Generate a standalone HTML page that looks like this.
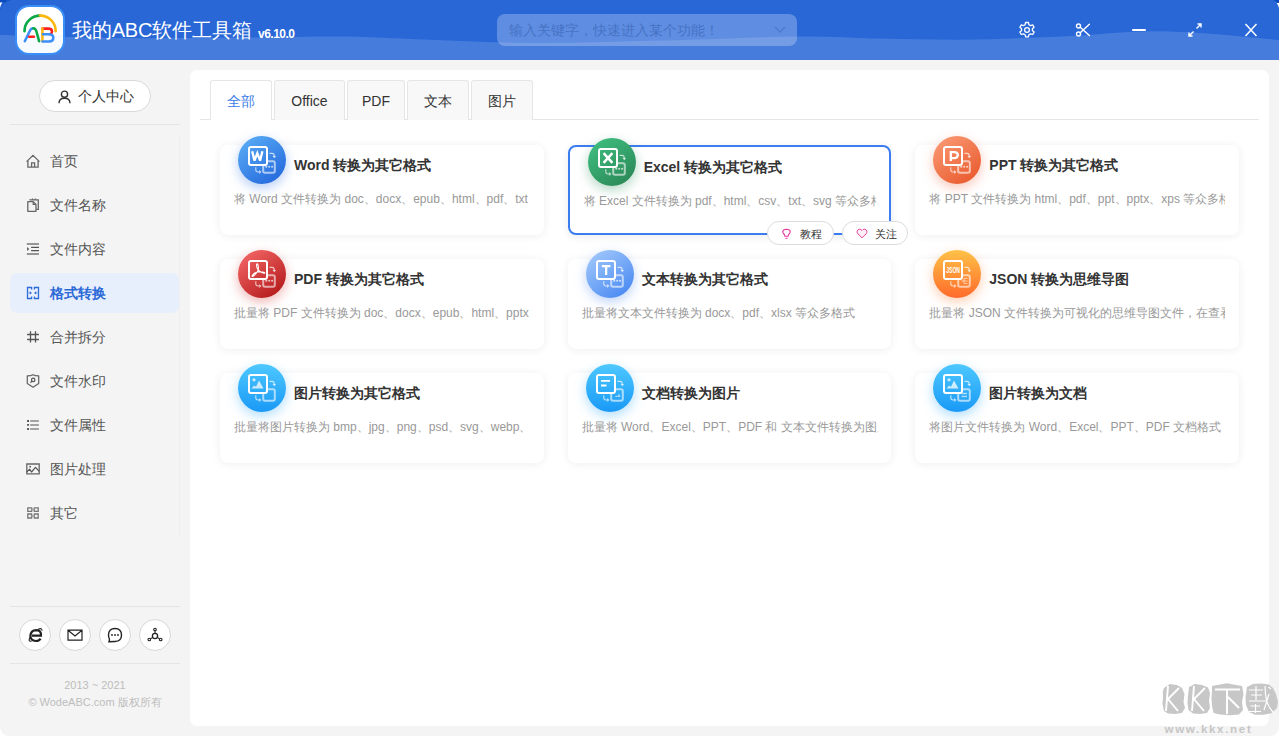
<!DOCTYPE html>
<html><head><meta charset="utf-8">
<style>
*{margin:0;padding:0;box-sizing:border-box}
html,body{width:1279px;height:736px;overflow:hidden;background:#f4f4f4;font-family:"Liberation Sans",sans-serif;}
.abs{position:absolute}
#hdr{position:absolute;left:0;top:0;width:1279px;height:60px;}
.ttl{position:absolute;left:72px;top:17px;font-size:20px;color:#fff;line-height:26px;white-space:nowrap;letter-spacing:-0.2px}
.ver{position:absolute;left:258px;top:26.5px;font-size:12px;font-weight:bold;color:#fff;line-height:14px;letter-spacing:-0.5px}
.search{position:absolute;left:497px;top:14px;width:300px;height:32px;border-radius:8px;background:rgba(255,255,255,0.25)}
.search span{position:absolute;left:12px;top:8px;font-size:14px;line-height:16px;color:rgba(40,80,160,0.45);white-space:nowrap}
#side{position:absolute;left:0;top:60px;width:190px;height:676px}
.pill{position:absolute;left:39px;top:80px;width:112px;height:32px;border-radius:16px;background:#fff;border:1px solid #d9d9d9;}
.pill span{position:absolute;left:38px;top:7px;font-size:14px;line-height:16px;color:#333;white-space:nowrap}
.hr{position:absolute;height:1px;background:#e4e4e4}
.nav{position:absolute;left:10px;width:169px;height:40px;border-radius:7px}
.nav span{position:absolute;left:40px;top:12px;font-size:14px;line-height:16px;color:#555;white-space:nowrap}
.nav svg{position:absolute;left:16px;top:13px}
.nav.on{background:#e8effc}
.nav.on span{color:#2c6ad8;font-weight:bold}
.circ{position:absolute;top:619px;width:32px;height:32px;border-radius:50%;background:#fff;border:1px solid #d8d8d8}
.circ svg{position:absolute;left:7px;top:7px}
.copy{position:absolute;left:0;width:190px;text-align:center;font-size:11px;line-height:13px;color:#bdbdbd;white-space:nowrap}
#main{position:absolute;left:190px;top:70px;width:1079px;height:656px;background:#fff;border-radius:7px}
.tab{position:absolute;top:80px;height:40px;background:#f8f8f8;border:1px solid #e6e6e6;border-bottom:none;border-radius:3px 3px 0 0;font-size:14px;color:#333;text-align:center;line-height:40px}
.tab.on{background:#fff;color:#3b7de6;z-index:2}
.tabline{position:absolute;left:200px;top:119px;width:1059px;height:1px;background:#e6e6e6}
.card{position:absolute;width:323.67px;height:90px;background:#fff;border-radius:8px;box-shadow:0 1px 10px rgba(0,0,0,0.07)}
.card .ic{position:absolute;left:18px;top:-9px;width:48px;height:48px;border-radius:50%}
.card .t{position:absolute;left:74px;top:11px;font-size:14px;line-height:18px;font-weight:bold;color:#333;white-space:nowrap}
.card .d{position:absolute;left:14px;top:47px;width:296px;overflow:hidden;font-size:12px;line-height:14px;color:#999;white-space:nowrap}
.card.hov{border:2px solid #3b7cf0;box-shadow:0 2px 10px rgba(0,0,0,0.08)}
.card.hov .ic{left:18px;top:-9px}
.card.hov .t{left:74px;top:11px}
.card.hov .d{left:14px;top:47px;width:292px}
.btn{position:absolute;top:221px;height:24px;border-radius:12px;background:#fff;border:1px solid #dcdcdc;font-size:11px;color:#333;line-height:22px}
.btn span{position:absolute;left:32px;top:1px}
.btn svg{position:absolute;left:12px;top:5px}
.c{display:inline-block;width:1em;text-align:center;font-style:normal}
.ttl .c{margin-right:-0.2px}
</style></head><body>
<!-- header -->
<svg id="hdr" width="1279" height="60" viewBox="0 0 1279 60">
  <rect x="0" y="0" width="1279" height="60" fill="#2967d7"/>
  <path d="M0 35 C20.0 35.50,78.3 37.58,120 38 C161.7 38.42,213.3 37.75,250 37.5 C286.7 37.25,315.0 36.33,340 36.5 C365.0 36.67,373.8 37.53,400 38.5 C426.2 39.47,470.3 41.58,497 42.3 C523.7 43.02,527.8 43.23,560 42.8 C592.2 42.37,650.0 40.75,690 39.7 C730.0 38.65,768.3 36.68,800 36.5 C831.7 36.32,853.3 38.07,880 38.6 C906.7 39.13,935.0 39.85,960 39.7 C985.0 39.55,1010.0 38.40,1030 37.7 C1050.0 37.00,1061.7 36.53,1080 35.5 C1098.3 34.47,1120.0 31.92,1140 31.5 C1160.0 31.08,1176.8 31.58,1200 33 C1223.2 34.42,1265.8 38.83,1279 40 L1279 60 L0 60 Z" fill="#467ddd"/>
  <path d="M0 0 L12 0 Q2 2 0 10 Z" fill="#0a4fc0" opacity="0.6"/>
</svg>
<div class="abs" style="left:0;top:0;width:6px;height:1.5px;background:#0a4cbf"></div>
<svg class="abs" style="left:0;top:0" width="8" height="10" viewBox="0 0 8 10"><path d="M0 2.5 L2.5 2.5 Q0.8 4.5 0 8 Z" fill="#fff"/></svg>
<svg class="abs" style="left:1271px;top:0" width="8" height="10" viewBox="0 0 8 10"><path d="M2 0 H8 V2.8 H6.5 Q4.5 0.8 2 0 Z" fill="#0a4cbf"/><path d="M8 3 H5.6 Q7.4 5 8 8 Z" fill="#fff"/></svg>
<div class="abs" style="left:15px;top:5px;width:50px;height:49.5px;border-radius:14px;background:linear-gradient(#fff 60%,#f7faff 60%);border:2.4px solid #3a8ef8;"></div>
<svg class="abs" style="left:15px;top:5px" width="50" height="50" viewBox="0 0 50 50">
  <path d="M25.1 10.6 A 15.6 15.6 0 0 0 9.5 26.2" fill="none" stroke="#0aa846" stroke-width="2.6" stroke-linecap="round"/>
  <path d="M25.1 10.6 A 15.6 15.6 0 0 1 40.7 26.2" fill="none" stroke="#fbb710" stroke-width="2.6" stroke-linecap="round"/>
  <path d="M9.8 36.2 L14.9 25.8 Q16.1 23.2 18.3 23.2" fill="none" stroke="#3c8ff7" stroke-width="2.6" stroke-linecap="round" stroke-linejoin="round"/>
  <path d="M18.3 23.2 Q20.4 23.3 21.3 26 L24.1 36.2" fill="none" stroke="#0aa846" stroke-width="2.6" stroke-linecap="round" stroke-linejoin="round"/>
  <path d="M14.2 31.8 L18.9 31.8" stroke="#ff1f1f" stroke-width="2.6" stroke-linecap="round"/>
  <path d="M27.4 23.6 H33 Q37 23.6 37 26.3 Q37 28.5 35.4 29" fill="none" stroke="#ff1f1f" stroke-width="2.6" stroke-linecap="round"/>
  <path d="M27.4 23.6 V36.3" stroke="#fbb710" stroke-width="2.6" stroke-linecap="round"/>
  <path d="M27.6 36.5 H34 Q38.3 36.5 38.3 32.8 Q38.3 29.2 33.8 29.2 H28" fill="none" stroke="#3c8ff7" stroke-width="2.6" stroke-linecap="round"/>
</svg>
<div class="ttl"><i class="c">我</i><i class="c">的</i>ABC<i class="c">软</i><i class="c">件</i><i class="c">工</i><i class="c">具</i><i class="c">箱</i></div>
<div class="ver">v6.10.0</div>
<div class="search"><span><i class="c">输</i><i class="c">入</i><i class="c">关</i><i class="c">键</i><i class="c">字</i><i class="c">，</i><i class="c">快</i><i class="c">速</i><i class="c">进</i><i class="c">入</i><i class="c">某</i><i class="c">个</i><i class="c">功</i><i class="c">能</i><i class="c">！</i></span>
  <svg class="abs" style="left:277px;top:11px" width="12" height="10" viewBox="0 0 12 10"><path d="M1 2 L6 7 L11 2" fill="none" stroke="rgba(60,100,180,0.45)" stroke-width="1.3"/></svg>
</div>
<!-- window controls -->
<svg class="abs" style="left:1018px;top:21px" width="18" height="18" viewBox="0 0 18 18">
  <path d="M7.6 1.5 h2.8 l0.5 2.2 l1.6 0.9 l2.2 -0.7 l1.4 2.4 l-1.7 1.5 v1.8 l1.7 1.5 l-1.4 2.4 l-2.2 -0.7 l-1.6 0.9 l-0.5 2.2 h-2.8 l-0.5 -2.2 l-1.6 -0.9 l-2.2 0.7 l-1.4 -2.4 l1.7 -1.5 v-1.8 l-1.7 -1.5 l1.4 -2.4 l2.2 0.7 l1.6 -0.9 z" fill="none" stroke="#fff" stroke-width="1.3" stroke-linejoin="round"/>
  <circle cx="9" cy="9" r="2.4" fill="none" stroke="#fff" stroke-width="1.3"/>
</svg>
<svg class="abs" style="left:1075px;top:22px" width="16" height="16" viewBox="0 0 16 16">
  <circle cx="3.5" cy="4" r="2" fill="none" stroke="#fff" stroke-width="1.4"/>
  <circle cx="3.5" cy="12" r="2" fill="none" stroke="#fff" stroke-width="1.4"/>
  <path d="M5.2 5.2 L14.4 13.5 M5.2 10.8 L14.4 2.3" stroke="#fff" stroke-width="1.4" stroke-linecap="round"/>
</svg>
<div class="abs" style="left:1132px;top:29px;width:14px;height:2px;background:#fff;border-radius:1px"></div>
<svg class="abs" style="left:1187px;top:22px" width="16" height="16" viewBox="0 0 16 16">
  <path d="M9.5 6.5 L14 2 M10.5 2 H14 V5.5 M6.5 9.5 L2 14 M2 10.5 V14 H5.5" fill="none" stroke="#fff" stroke-width="1.4"/>
</svg>
<svg class="abs" style="left:1244px;top:23px" width="14" height="14" viewBox="0 0 14 14">
  <path d="M1.5 1 L12.5 13 M12.5 1 L1.5 13" stroke="#fff" stroke-width="1.5"/>
</svg>

<!-- sidebar -->
<div class="pill"><svg class="abs" style="left:17.5px;top:8.5px" width="13" height="14" viewBox="0 0 13 14"><circle cx="6.5" cy="4.2" r="3.1" fill="none" stroke="#333" stroke-width="1.4"/><path d="M1 13.3 Q1 8.2 6.5 8.2 Q12 8.2 12 13.3" fill="none" stroke="#333" stroke-width="1.4"/></svg><span><i class="c">个</i><i class="c">人</i><i class="c">中</i><i class="c">心</i></span></div>
<div class="hr" style="left:10px;top:124px;width:170px"></div>
<div class="abs" style="left:179px;top:137px;width:1px;height:398px;background:#eeeeee"></div>

<div class="nav" style="top:141px"><svg width="14" height="14" viewBox="0 0 14 14"><path d="M0.6 7.6 L7 1.4 L13.4 7.6 M1.9 6.6 V13.2 H12.1 V6.6 M5.6 13.2 V8.9 H8.6 V13.2" fill="none" stroke="#666" stroke-width="1.3"/></svg><span><i class="c">首</i><i class="c">页</i></span></div>
<div class="nav" style="top:185px"><svg width="14" height="14" viewBox="0 0 14 14"><path d="M3.9 2.2 V1.9 H12.3 V11.4 H10.2 M6.5 0.6 V1.9 M9.4 0.6 V1.9" fill="none" stroke="#666" stroke-width="1.3"/><path d="M1.8 3.6 H7.2 L10 6.4 V13.3 H1.8 Z" fill="#f4f4f4" stroke="#666" stroke-width="1.3" stroke-linejoin="round"/><path d="M7.2 3.6 V6.4 H10" fill="none" stroke="#666" stroke-width="1.2"/></svg><span><i class="c">文</i><i class="c">件</i><i class="c">名</i><i class="c">称</i></span></div>
<div class="nav" style="top:229px"><svg width="14" height="14" viewBox="0 0 14 14"><path d="M0.8 2.1 H13 M0.8 12 H13" stroke="#777" stroke-width="1.5"/><path d="M5.1 5.4 H13 M5.1 8.6 H13" stroke="#555" stroke-width="1.3"/><path d="M1.1 5 L3.3 7 L1.1 9 Z" fill="#555"/></svg><span><i class="c">文</i><i class="c">件</i><i class="c">内</i><i class="c">容</i></span></div>
<div class="nav on" style="top:273px"><svg width="14" height="14" viewBox="0 0 14 14"><path d="M5.6 3.4 V1.5 H1.5 V12.5 H5.6 V10.6 M8.4 3.4 V1.5 H12.5 V12.5 H8.4 V10.6" fill="none" stroke="#2c6ad8" stroke-width="1.3"/><path d="M1.5 6.9 H4.2 M12.5 6.9 H9.8" stroke="#7aa3e8" stroke-width="1"/><path d="M3.8 5.2 L6 6.9 L3.8 8.6 Z M10.2 5.2 L8 6.9 L10.2 8.6 Z" fill="#2c6ad8"/></svg><span><i class="c">格</i><i class="c">式</i><i class="c">转</i><i class="c">换</i></span></div>
<div class="nav" style="top:317px"><svg width="14" height="14" viewBox="0 0 14 14"><path d="M4.5 1.3 V12.5 M9.5 1.3 V12.5 M1.1 4.5 H12.9 M1.1 9.5 H12.9" fill="none" stroke="#555" stroke-width="1.3"/></svg><span><i class="c">合</i><i class="c">并</i><i class="c">拆</i><i class="c">分</i></span></div>
<div class="nav" style="top:361px"><svg width="14" height="14" viewBox="0 0 14 14"><path d="M7 0.7 Q5 1.8 1.3 1.8 V9.4 L7 13.2 L12.7 9.4 V1.8 Q9 1.8 7 0.7 Z" fill="none" stroke="#666" stroke-width="1.25" stroke-linejoin="round"/><circle cx="7.2" cy="5.9" r="1.7" fill="none" stroke="#555" stroke-width="1.2"/><path d="M6 7.2 L4.5 8.6" stroke="#555" stroke-width="1.2"/></svg><span><i class="c">文</i><i class="c">件</i><i class="c">水</i><i class="c">印</i></span></div>
<div class="nav" style="top:405px"><svg width="14" height="14" viewBox="0 0 14 14"><path d="M4.1 3 H12.9 M4.1 6.9 H12.9 M4.1 11 H12.9" stroke="#888" stroke-width="1.5"/><path d="M1.1 3 H3 M1.1 6.9 H3 M1.1 11 H3" stroke="#555" stroke-width="1.8"/></svg><span><i class="c">文</i><i class="c">件</i><i class="c">属</i><i class="c">性</i></span></div>
<div class="nav" style="top:449px"><svg width="14" height="14" viewBox="0 0 14 14"><path d="M0.8 2 H13.2 V11.8 H0.8 Z" fill="none" stroke="#666" stroke-width="1.3"/><path d="M0.8 10 L3.6 7.2 L5.5 10 L9.5 5.3 L13.2 9.3" fill="none" stroke="#555" stroke-width="1.2" stroke-linejoin="round"/><circle cx="4.2" cy="4.7" r="0.9" fill="#555"/></svg><span><i class="c">图</i><i class="c">片</i><i class="c">处</i><i class="c">理</i></span></div>
<div class="nav" style="top:493px"><svg width="14" height="14" viewBox="0 0 14 14"><path d="M1.8 1.8 H5.6 V5.4 H1.8 Z M8.4 1.8 H12.2 V5.4 H8.4 Z M1.8 8 H5.6 V12 H1.8 Z M8.4 8 H12.2 V12 H8.4 Z" fill="none" stroke="#777" stroke-width="1.3"/><path d="M5.6 3.6 H8.4 M5.6 10 H8.4" stroke="#aaa" stroke-width="2.6"/></svg><span><i class="c">其</i><i class="c">它</i></span></div>

<div class="hr" style="left:10px;top:606px;width:170px"></div>
<div class="circ" style="left:19px"><svg width="16" height="16" viewBox="0 0 16 16"><path d="M5 8.6 H14 Q14.3 3.2 9.2 3.1 Q3.8 3.3 3.4 8.8 Q3.5 13.8 8.8 14 Q12 14 13.6 11.6" fill="none" stroke="#222" stroke-width="2.2"/><path d="M3.4 9.8 Q0.3 14.8 4.6 14.2 M10.8 2.6 Q15.2 0.2 15 3.8" fill="none" stroke="#222" stroke-width="1.1"/></svg></div>
<div class="circ" style="left:59px"><svg width="16" height="16" viewBox="0 0 16 16"><path d="M1 3.2 H15 V13.2 H1 Z M1 3.2 L8 9 L15 3.2" fill="none" stroke="#222" stroke-width="1.2"/></svg></div>
<div class="circ" style="left:99px"><svg width="16" height="16" viewBox="0 0 16 16"><path d="M8 1.5 Q14.5 1.5 14.5 8 Q14.5 14.5 8 14.5 Q5 14.5 2 14.8 Q2.5 13.5 2.4 12 Q1.5 10.5 1.5 8 Q1.5 1.5 8 1.5 Z" fill="none" stroke="#222" stroke-width="1.4"/><circle cx="5" cy="8" r="0.9" fill="#222"/><circle cx="8" cy="8" r="0.9" fill="#222"/><circle cx="11" cy="8" r="0.9" fill="#222"/></svg></div>
<div class="circ" style="left:139px"><svg width="16" height="16" viewBox="0 0 16 16"><circle cx="8" cy="2.5" r="1.3" fill="none" stroke="#222" stroke-width="1.1"/><circle cx="2.3" cy="12.5" r="1.3" fill="none" stroke="#222" stroke-width="1.1"/><circle cx="13.7" cy="12.5" r="1.3" fill="none" stroke="#222" stroke-width="1.1"/><circle cx="8" cy="9" r="2.6" fill="none" stroke="#222" stroke-width="1.3"/><path d="M8 3.8 V6.4 M3.5 11.8 L5.8 10.4 M12.5 11.8 L10.2 10.4" stroke="#222" stroke-width="1.1"/></svg></div>
<div class="hr" style="left:10px;top:663px;width:170px"></div>
<div class="copy" style="top:679px">2013 ~ 2021</div>
<div class="copy" style="top:696px">© WodeABC.com <i class="c">版</i><i class="c">权</i><i class="c">所</i><i class="c">有</i></div>

<!-- main -->
<div id="main"></div>
<div class="tabline"></div>
<div class="tab on" style="left:210px;width:62px"><i class="c">全</i><i class="c">部</i></div>
<div class="tab" style="left:274px;width:71px">Office</div>
<div class="tab" style="left:347px;width:58px">PDF</div>
<div class="tab" style="left:407px;width:62px"><i class="c">文</i><i class="c">本</i></div>
<div class="tab" style="left:471px;width:62px"><i class="c">图</i><i class="c">片</i></div>

<!--CARDS-->
<div class="card" style="left:220px;top:145px"><div class="ic" style="box-shadow:0 4px 12px rgba(40,110,230,0.35)"><svg width="48" height="48" viewBox="0 0 48 48"><defs><linearGradient id="gw" gradientUnits="userSpaceOnUse" x1="8" y1="4" x2="40" y2="48"><stop offset="0" stop-color="#56a8f4"/><stop offset="1" stop-color="#2367dc"/></linearGradient></defs><circle cx="24" cy="24" r="24" fill="url(#gw)"/><rect x="25.2" y="25.2" width="11.6" height="11.6" rx="1.8" fill="none" stroke="rgba(255,255,255,0.6)" stroke-width="2"/><circle cx="28.3" cy="30.8" r="1.05" fill="rgba(255,255,255,0.7)"/><circle cx="31.2" cy="30.8" r="1.05" fill="rgba(255,255,255,0.7)"/><circle cx="34.1" cy="30.8" r="1.05" fill="rgba(255,255,255,0.7)"/><path d="M31.5 17.4 H34 Q36.3 17.4 36.3 20.2 V21" fill="none" stroke="rgba(255,255,255,0.7)" stroke-width="1.1"/><path d="M35 20 L36.3 21.4 L37.6 20" fill="none" stroke="rgba(255,255,255,0.7)" stroke-width="1.1"/><path d="M17.8 31.2 V33.8 Q17.8 36 20 36 H22" fill="none" stroke="rgba(255,255,255,0.7)" stroke-width="1.1"/><path d="M21.2 34.7 L22.6 36 L21.2 37.3" fill="none" stroke="rgba(255,255,255,0.7)" stroke-width="1.1"/><rect x="11" y="11" width="18" height="18" rx="2" fill="url(#gw)" stroke="#fff" stroke-width="2"/><path d="M14.2 15.3 L16.5 24.6 L19.3 17.2 L22.1 24.6 L24.4 15.3" fill="none" stroke="#fff" stroke-width="2.3" stroke-linejoin="miter" stroke-miterlimit="3"/></svg></div><div class="t">Word <i class="c">转</i><i class="c">换</i><i class="c">为</i><i class="c">其</i><i class="c">它</i><i class="c">格</i><i class="c">式</i></div><div class="d"><i class="c">将</i> Word <i class="c">文</i><i class="c">件</i><i class="c">转</i><i class="c">换</i><i class="c">为</i> doc<i class="c">、</i>docx<i class="c">、</i>epub<i class="c">、</i>html<i class="c">、</i>pdf<i class="c">、</i>txt <i class="c">等</i><i class="c">众</i><i class="c">多</i><i class="c">格</i><i class="c">式</i></div></div>
<div class="card hov" style="left:567.67px;top:145px"><div class="ic" style="box-shadow:0 4px 12px rgba(40,140,90,0.35)"><svg width="48" height="48" viewBox="0 0 48 48"><defs><linearGradient id="gx" gradientUnits="userSpaceOnUse" x1="8" y1="4" x2="40" y2="48"><stop offset="0" stop-color="#3dbb7d"/><stop offset="1" stop-color="#2b8756"/></linearGradient></defs><circle cx="24" cy="24" r="24" fill="url(#gx)"/><rect x="25.2" y="25.2" width="11.6" height="11.6" rx="1.8" fill="none" stroke="rgba(255,255,255,0.6)" stroke-width="2"/><circle cx="28.3" cy="30.8" r="1.05" fill="rgba(255,255,255,0.7)"/><circle cx="31.2" cy="30.8" r="1.05" fill="rgba(255,255,255,0.7)"/><circle cx="34.1" cy="30.8" r="1.05" fill="rgba(255,255,255,0.7)"/><path d="M31.5 17.4 H34 Q36.3 17.4 36.3 20.2 V21" fill="none" stroke="rgba(255,255,255,0.7)" stroke-width="1.1"/><path d="M35 20 L36.3 21.4 L37.6 20" fill="none" stroke="rgba(255,255,255,0.7)" stroke-width="1.1"/><path d="M17.8 31.2 V33.8 Q17.8 36 20 36 H22" fill="none" stroke="rgba(255,255,255,0.7)" stroke-width="1.1"/><path d="M21.2 34.7 L22.6 36 L21.2 37.3" fill="none" stroke="rgba(255,255,255,0.7)" stroke-width="1.1"/><rect x="11" y="11" width="18" height="18" rx="2" fill="url(#gx)" stroke="#fff" stroke-width="2"/><path d="M15.6 15.2 L24.4 24.8 M24.4 15.2 L15.6 24.8" fill="none" stroke="#fff" stroke-width="2.5"/></svg></div><div class="t">Excel <i class="c">转</i><i class="c">换</i><i class="c">为</i><i class="c">其</i><i class="c">它</i><i class="c">格</i><i class="c">式</i></div><div class="d"><i class="c">将</i> Excel <i class="c">文</i><i class="c">件</i><i class="c">转</i><i class="c">换</i><i class="c">为</i> pdf<i class="c">、</i>html<i class="c">、</i>csv<i class="c">、</i>txt<i class="c">、</i>svg <i class="c">等</i><i class="c">众</i><i class="c">多</i><i class="c">格</i><i class="c">式</i></div></div>
<div class="card" style="left:915.33px;top:145px"><div class="ic" style="box-shadow:0 4px 12px rgba(240,100,60,0.35)"><svg width="48" height="48" viewBox="0 0 48 48"><defs><linearGradient id="gp" gradientUnits="userSpaceOnUse" x1="8" y1="4" x2="40" y2="48"><stop offset="0" stop-color="#f9956f"/><stop offset="1" stop-color="#e9592c"/></linearGradient></defs><circle cx="24" cy="24" r="24" fill="url(#gp)"/><rect x="25.2" y="25.2" width="11.6" height="11.6" rx="1.8" fill="none" stroke="rgba(255,255,255,0.6)" stroke-width="2"/><circle cx="28.3" cy="30.8" r="1.05" fill="rgba(255,255,255,0.7)"/><circle cx="31.2" cy="30.8" r="1.05" fill="rgba(255,255,255,0.7)"/><circle cx="34.1" cy="30.8" r="1.05" fill="rgba(255,255,255,0.7)"/><path d="M31.5 17.4 H34 Q36.3 17.4 36.3 20.2 V21" fill="none" stroke="rgba(255,255,255,0.7)" stroke-width="1.1"/><path d="M35 20 L36.3 21.4 L37.6 20" fill="none" stroke="rgba(255,255,255,0.7)" stroke-width="1.1"/><path d="M17.8 31.2 V33.8 Q17.8 36 20 36 H22" fill="none" stroke="rgba(255,255,255,0.7)" stroke-width="1.1"/><path d="M21.2 34.7 L22.6 36 L21.2 37.3" fill="none" stroke="rgba(255,255,255,0.7)" stroke-width="1.1"/><rect x="11" y="11" width="18" height="18" rx="2" fill="url(#gp)" stroke="#fff" stroke-width="2"/><path d="M17.8 25 V16.1 H21.3 Q24.8 16.1 24.8 19.1 Q24.8 22.1 21.3 22.1 H17.8" fill="none" stroke="#fff" stroke-width="2.3"/></svg></div><div class="t">PPT <i class="c">转</i><i class="c">换</i><i class="c">为</i><i class="c">其</i><i class="c">它</i><i class="c">格</i><i class="c">式</i></div><div class="d"><i class="c">将</i> PPT <i class="c">文</i><i class="c">件</i><i class="c">转</i><i class="c">换</i><i class="c">为</i> html<i class="c">、</i>pdf<i class="c">、</i>ppt<i class="c">、</i>pptx<i class="c">、</i>xps <i class="c">等</i><i class="c">众</i><i class="c">多</i><i class="c">格</i><i class="c">式</i></div></div>
<div class="card" style="left:220px;top:259px"><div class="ic" style="box-shadow:0 4px 12px rgba(210,40,40,0.35)"><svg width="48" height="48" viewBox="0 0 48 48"><defs><linearGradient id="gf" gradientUnits="userSpaceOnUse" x1="8" y1="4" x2="40" y2="48"><stop offset="0" stop-color="#f06262"/><stop offset="1" stop-color="#b21818"/></linearGradient></defs><circle cx="24" cy="24" r="24" fill="url(#gf)"/><rect x="25.2" y="25.2" width="11.6" height="11.6" rx="1.8" fill="none" stroke="rgba(255,255,255,0.6)" stroke-width="2"/><circle cx="28.3" cy="30.8" r="1.05" fill="rgba(255,255,255,0.7)"/><circle cx="31.2" cy="30.8" r="1.05" fill="rgba(255,255,255,0.7)"/><circle cx="34.1" cy="30.8" r="1.05" fill="rgba(255,255,255,0.7)"/><path d="M31.5 17.4 H34 Q36.3 17.4 36.3 20.2 V21" fill="none" stroke="rgba(255,255,255,0.7)" stroke-width="1.1"/><path d="M35 20 L36.3 21.4 L37.6 20" fill="none" stroke="rgba(255,255,255,0.7)" stroke-width="1.1"/><path d="M17.8 31.2 V33.8 Q17.8 36 20 36 H22" fill="none" stroke="rgba(255,255,255,0.7)" stroke-width="1.1"/><path d="M21.2 34.7 L22.6 36 L21.2 37.3" fill="none" stroke="rgba(255,255,255,0.7)" stroke-width="1.1"/><rect x="11" y="11" width="18" height="18" rx="2" fill="url(#gf)" stroke="#fff" stroke-width="2"/><path d="M14.3 25.6 Q13.6 26.9 15 26.3 Q17.6 24.8 19.9 20.8 Q20.8 18.8 20.1 15.3 Q19.5 13.2 18.7 14.2 Q18.2 15.6 19.3 18.6 Q21.2 22.2 26 23.3 Q27.3 23.3 26.4 22.4 Q24.2 21.3 19.8 21.9 Q16.4 22.6 14.3 25.6 Z" fill="none" stroke="#fff" stroke-width="1.1" stroke-linejoin="round"/></svg></div><div class="t">PDF <i class="c">转</i><i class="c">换</i><i class="c">为</i><i class="c">其</i><i class="c">它</i><i class="c">格</i><i class="c">式</i></div><div class="d"><i class="c">批</i><i class="c">量</i><i class="c">将</i> PDF <i class="c">文</i><i class="c">件</i><i class="c">转</i><i class="c">换</i><i class="c">为</i> doc<i class="c">、</i>docx<i class="c">、</i>epub<i class="c">、</i>html<i class="c">、</i>pptx<i class="c">、</i>txt <i class="c">等</i><i class="c">众</i><i class="c">多</i><i class="c">格</i><i class="c">式</i></div></div>
<div class="card" style="left:567.67px;top:259px"><div class="ic" style="box-shadow:0 4px 12px rgba(70,130,240,0.35)"><svg width="48" height="48" viewBox="0 0 48 48"><defs><linearGradient id="gt" gradientUnits="userSpaceOnUse" x1="8" y1="4" x2="40" y2="48"><stop offset="0" stop-color="#9cc4fa"/><stop offset="1" stop-color="#4788f2"/></linearGradient></defs><circle cx="24" cy="24" r="24" fill="url(#gt)"/><rect x="25.2" y="25.2" width="11.6" height="11.6" rx="1.8" fill="none" stroke="rgba(255,255,255,0.6)" stroke-width="2"/><circle cx="28.3" cy="30.8" r="1.05" fill="rgba(255,255,255,0.7)"/><circle cx="31.2" cy="30.8" r="1.05" fill="rgba(255,255,255,0.7)"/><circle cx="34.1" cy="30.8" r="1.05" fill="rgba(255,255,255,0.7)"/><path d="M31.5 17.4 H34 Q36.3 17.4 36.3 20.2 V21" fill="none" stroke="rgba(255,255,255,0.7)" stroke-width="1.1"/><path d="M35 20 L36.3 21.4 L37.6 20" fill="none" stroke="rgba(255,255,255,0.7)" stroke-width="1.1"/><path d="M17.8 31.2 V33.8 Q17.8 36 20 36 H22" fill="none" stroke="rgba(255,255,255,0.7)" stroke-width="1.1"/><path d="M21.2 34.7 L22.6 36 L21.2 37.3" fill="none" stroke="rgba(255,255,255,0.7)" stroke-width="1.1"/><rect x="11" y="11" width="18" height="18" rx="2" fill="url(#gt)" stroke="#fff" stroke-width="2"/><path d="M15.9 16.1 H24.4 M20.15 16.1 V24.9" fill="none" stroke="#fff" stroke-width="2.3"/></svg></div><div class="t"><i class="c">文</i><i class="c">本</i><i class="c">转</i><i class="c">换</i><i class="c">为</i><i class="c">其</i><i class="c">它</i><i class="c">格</i><i class="c">式</i></div><div class="d"><i class="c">批</i><i class="c">量</i><i class="c">将</i><i class="c">文</i><i class="c">本</i><i class="c">文</i><i class="c">件</i><i class="c">转</i><i class="c">换</i><i class="c">为</i> docx<i class="c">、</i>pdf<i class="c">、</i>xlsx <i class="c">等</i><i class="c">众</i><i class="c">多</i><i class="c">格</i><i class="c">式</i></div></div>
<div class="card" style="left:915.33px;top:259px"><div class="ic" style="box-shadow:0 4px 12px rgba(255,120,40,0.35)"><svg width="48" height="48" viewBox="0 0 48 48"><defs><linearGradient id="gj" gradientUnits="userSpaceOnUse" x1="24" y1="0" x2="24" y2="48"><stop offset="0" stop-color="#ffc247"/><stop offset="1" stop-color="#ff6a2b"/></linearGradient></defs><circle cx="24" cy="24" r="24" fill="url(#gj)"/><rect x="25.2" y="25.2" width="11.6" height="11.6" rx="1.8" fill="none" stroke="rgba(255,255,255,0.6)" stroke-width="2"/><path d="M28.5 31 H31 M31 28.5 H34.5 M31 31 H34.5 M31 33.5 H34.5 M31 28.5 V33.5" stroke="rgba(255,255,255,0.6)" stroke-width="0.9" fill="none"/><path d="M31.5 17.4 H34 Q36.3 17.4 36.3 20.2 V21" fill="none" stroke="rgba(255,255,255,0.7)" stroke-width="1.1"/><path d="M35 20 L36.3 21.4 L37.6 20" fill="none" stroke="rgba(255,255,255,0.7)" stroke-width="1.1"/><path d="M17.8 31.2 V33.8 Q17.8 36 20 36 H22" fill="none" stroke="rgba(255,255,255,0.7)" stroke-width="1.1"/><path d="M21.2 34.7 L22.6 36 L21.2 37.3" fill="none" stroke="rgba(255,255,255,0.7)" stroke-width="1.1"/><rect x="11" y="11" width="18" height="18" rx="2" fill="url(#gj)" stroke="#fff" stroke-width="2"/><text x="20.1" y="23.1" text-anchor="middle" font-family="Liberation Sans, sans-serif" font-size="8.4" font-weight="bold" fill="#fff" textLength="13.6" lengthAdjust="spacingAndGlyphs">JSON</text></svg></div><div class="t">JSON <i class="c">转</i><i class="c">换</i><i class="c">为</i><i class="c">思</i><i class="c">维</i><i class="c">导</i><i class="c">图</i></div><div class="d"><i class="c">批</i><i class="c">量</i><i class="c">将</i> JSON <i class="c">文</i><i class="c">件</i><i class="c">转</i><i class="c">换</i><i class="c">为</i><i class="c">可</i><i class="c">视</i><i class="c">化</i><i class="c">的</i><i class="c">思</i><i class="c">维</i><i class="c">导</i><i class="c">图</i><i class="c">文</i><i class="c">件</i><i class="c">，</i><i class="c">在</i><i class="c">查</i><i class="c">看</i><i class="c">时</i><i class="c">更</i><i class="c">加</i><i class="c">直</i><i class="c">观</i></div></div>
<div class="card" style="left:220px;top:373px"><div class="ic" style="box-shadow:0 4px 12px rgba(30,160,250,0.35)"><svg width="48" height="48" viewBox="0 0 48 48"><defs><linearGradient id="gi" gradientUnits="userSpaceOnUse" x1="24" y1="0" x2="24" y2="48"><stop offset="0" stop-color="#4ec8ff"/><stop offset="1" stop-color="#1999f6"/></linearGradient></defs><circle cx="24" cy="24" r="24" fill="url(#gi)"/><rect x="25.2" y="25.2" width="11.6" height="11.6" rx="1.8" fill="none" stroke="rgba(255,255,255,0.6)" stroke-width="2"/><path d="M31.5 17.4 H34 Q36.3 17.4 36.3 20.2 V21" fill="none" stroke="rgba(255,255,255,0.7)" stroke-width="1.1"/><path d="M35 20 L36.3 21.4 L37.6 20" fill="none" stroke="rgba(255,255,255,0.7)" stroke-width="1.1"/><path d="M17.8 31.2 V33.8 Q17.8 36 20 36 H22" fill="none" stroke="rgba(255,255,255,0.7)" stroke-width="1.1"/><path d="M21.2 34.7 L22.6 36 L21.2 37.3" fill="none" stroke="rgba(255,255,255,0.7)" stroke-width="1.1"/><rect x="11" y="11" width="18" height="18" rx="2" fill="url(#gi)" stroke="#fff" stroke-width="2"/><circle cx="16" cy="15.8" r="1.6" fill="rgba(255,255,255,0.75)"/><path d="M13.5 24.5 L16 21.5 L18 22.8 L21 16.5 L25.5 24.5 Z" fill="rgba(255,255,255,0.75)"/></svg></div><div class="t"><i class="c">图</i><i class="c">片</i><i class="c">转</i><i class="c">换</i><i class="c">为</i><i class="c">其</i><i class="c">它</i><i class="c">格</i><i class="c">式</i></div><div class="d"><i class="c">批</i><i class="c">量</i><i class="c">将</i><i class="c">图</i><i class="c">片</i><i class="c">转</i><i class="c">换</i><i class="c">为</i> bmp<i class="c">、</i>jpg<i class="c">、</i>png<i class="c">、</i>psd<i class="c">、</i>svg<i class="c">、</i>webp<i class="c">、</i>gif <i class="c">等</i><i class="c">众</i><i class="c">多</i><i class="c">格</i><i class="c">式</i></div></div>
<div class="card" style="left:567.67px;top:373px"><div class="ic" style="box-shadow:0 4px 12px rgba(30,160,250,0.35)"><svg width="48" height="48" viewBox="0 0 48 48"><defs><linearGradient id="gd" gradientUnits="userSpaceOnUse" x1="24" y1="0" x2="24" y2="48"><stop offset="0" stop-color="#4ec8ff"/><stop offset="1" stop-color="#1999f6"/></linearGradient></defs><circle cx="24" cy="24" r="24" fill="url(#gd)"/><rect x="25.2" y="25.2" width="11.6" height="11.6" rx="1.8" fill="none" stroke="rgba(255,255,255,0.6)" stroke-width="2"/><path d="M28.5 33 L30.5 31.5 L31.5 32.5 L33 29.5 L34.5 33 Z" fill="rgba(255,255,255,0.6)"/><path d="M31.5 17.4 H34 Q36.3 17.4 36.3 20.2 V21" fill="none" stroke="rgba(255,255,255,0.7)" stroke-width="1.1"/><path d="M35 20 L36.3 21.4 L37.6 20" fill="none" stroke="rgba(255,255,255,0.7)" stroke-width="1.1"/><path d="M17.8 31.2 V33.8 Q17.8 36 20 36 H22" fill="none" stroke="rgba(255,255,255,0.7)" stroke-width="1.1"/><path d="M21.2 34.7 L22.6 36 L21.2 37.3" fill="none" stroke="rgba(255,255,255,0.7)" stroke-width="1.1"/><rect x="11" y="11" width="18" height="18" rx="2" fill="url(#gd)" stroke="#fff" stroke-width="2"/><path d="M15 16.8 H24 M15 21.5 H20.5" stroke="#fff" stroke-width="1.8"/></svg></div><div class="t"><i class="c">文</i><i class="c">档</i><i class="c">转</i><i class="c">换</i><i class="c">为</i><i class="c">图</i><i class="c">片</i></div><div class="d"><i class="c">批</i><i class="c">量</i><i class="c">将</i> Word<i class="c">、</i>Excel<i class="c">、</i>PPT<i class="c">、</i>PDF <i class="c">和</i> <i class="c">文</i><i class="c">本</i><i class="c">文</i><i class="c">件</i><i class="c">转</i><i class="c">换</i><i class="c">为</i><i class="c">图</i><i class="c">片</i></div></div>
<div class="card" style="left:915.33px;top:373px"><div class="ic" style="box-shadow:0 4px 12px rgba(30,160,250,0.35)"><svg width="48" height="48" viewBox="0 0 48 48"><defs><linearGradient id="gk" gradientUnits="userSpaceOnUse" x1="24" y1="0" x2="24" y2="48"><stop offset="0" stop-color="#4ec8ff"/><stop offset="1" stop-color="#1999f6"/></linearGradient></defs><circle cx="24" cy="24" r="24" fill="url(#gk)"/><rect x="25.2" y="25.2" width="11.6" height="11.6" rx="1.8" fill="none" stroke="rgba(255,255,255,0.6)" stroke-width="2"/><path d="M28.5 29.5 H34 M28.5 32.5 H34" stroke="rgba(255,255,255,0.6)" stroke-width="1.3"/><path d="M31.5 17.4 H34 Q36.3 17.4 36.3 20.2 V21" fill="none" stroke="rgba(255,255,255,0.7)" stroke-width="1.1"/><path d="M35 20 L36.3 21.4 L37.6 20" fill="none" stroke="rgba(255,255,255,0.7)" stroke-width="1.1"/><path d="M17.8 31.2 V33.8 Q17.8 36 20 36 H22" fill="none" stroke="rgba(255,255,255,0.7)" stroke-width="1.1"/><path d="M21.2 34.7 L22.6 36 L21.2 37.3" fill="none" stroke="rgba(255,255,255,0.7)" stroke-width="1.1"/><rect x="11" y="11" width="18" height="18" rx="2" fill="url(#gk)" stroke="#fff" stroke-width="2"/><circle cx="16" cy="15.8" r="1.6" fill="rgba(255,255,255,0.75)"/><path d="M13.5 24.5 L16 21.5 L18 22.8 L21 16.5 L25.5 24.5 Z" fill="rgba(255,255,255,0.75)"/></svg></div><div class="t"><i class="c">图</i><i class="c">片</i><i class="c">转</i><i class="c">换</i><i class="c">为</i><i class="c">文</i><i class="c">档</i></div><div class="d"><i class="c">将</i><i class="c">图</i><i class="c">片</i><i class="c">文</i><i class="c">件</i><i class="c">转</i><i class="c">换</i><i class="c">为</i> Word<i class="c">、</i>Excel<i class="c">、</i>PPT<i class="c">、</i>PDF <i class="c">文</i><i class="c">档</i><i class="c">格</i><i class="c">式</i><i class="c">，</i><i class="c">方</i><i class="c">便</i><i class="c">编</i><i class="c">辑</i></div></div>
<div class="btn" style="left:767px;width:67px"><svg style="left:13.5px;top:5.5px" width="9" height="12" viewBox="0 0 12 14"><path d="M3.8 10 Q3.8 8.2 2.6 7 Q1 5.4 1 3.9 Q1.3 0.8 6 0.7 Q10.7 0.8 11 3.9 Q11 5.4 9.4 7 Q8.2 8.2 8.2 10 Z M4.5 12.6 H7.5" fill="none" stroke="#e8389a" stroke-width="1.5" stroke-linejoin="round"/></svg><span><i class="c">教</i><i class="c">程</i></span></div>
<div class="btn" style="left:842px;width:66px"><svg style="left:12.5px;top:6px" width="12" height="11" viewBox="-0.5 -0.5 15 14"><path d="M7 12 L1.8 7 Q0.4 5.5 0.8 3.6 Q1.5 1 4 1 Q5.8 1 7 2.8 Q8.2 1 10 1 Q12.5 1 13.2 3.6 Q13.6 5.5 12.2 7 Z" fill="#fff0f7" stroke="#e8389a" stroke-width="1.2" stroke-linejoin="round"/></svg><span style="left:32px"><i class="c">关</i><i class="c">注</i></span></div>
<!--/CARDS-->
<!--WM-->
<svg class="abs" style="left:1160px;top:680px" width="119" height="56" viewBox="0 0 119 56">
  <path d="M4 8 L10 4 L17 5 L22 8 L24.5 14 L23.5 22 L25 28 L22 33 L15 34 L8 33.5 L4 31 L2.5 24 L3 17 L2.8 12 Z" fill="#c7c7c7"/>
  <path d="M29 7 L35 4 L42 5 L48 7.5 L50 13 L49 21 L50 28 L47 33 L40 34 L33 33.5 L28.5 30 L27.5 23 L28 16 Z" fill="#c7c7c7"/>
  <path d="M52 6 L60 4.5 L67 3.2 L76 5 L82 6 L83.5 14 L82 22 L83 30 L79 34.5 L70 35.3 L60 34.5 L53.5 33 L52 26 L51.5 18 L52 11 Z" fill="#c7c7c7"/>
  <path d="M87 7 L93 4 L101 3.5 L109 4.5 L113 8 L116 14 L118 22 L117 28 L112 33 L104 34.8 L95 34.8 L89 32 L86 25 L85.5 17 Z" fill="#c7c7c7"/>
  <path d="M8 6 L6 31 M19 8 L8 19 L18 31" fill="none" stroke="#fff" stroke-width="1.9"/>
  <path d="M34 6 L32 31 M45 8 L34 19 L44 31" fill="none" stroke="#fff" stroke-width="1.9"/>
  <path d="M55 9.5 H80 M67 9.5 V34 M68 17 L79 28" fill="none" stroke="#fff" stroke-width="2"/>
  <path d="M89 10 H103 M91 15 H102 M96 6 V20 M89 21 H106 M90.5 26 H100 M95.5 24 V33 M89 31.5 H101 M105 6 L105.5 14 Q106.5 26 114 33 M109 14 L104 30 M108.5 7 L111 9" fill="none" stroke="#fff" stroke-width="1.2"/>
</svg>
<div class="abs" style="left:1164.5px;top:722px;font-size:11.5px;font-weight:bold;color:#c6c6c6;letter-spacing:1.7px;line-height:14px;white-space:nowrap">www.kkx.net</div>
<svg class="abs" style="left:1269px;top:726px" width="10" height="10" viewBox="0 0 10 10"><path d="M10 2 V10 H2 Q8.5 9 10 2 Z" fill="#fff"/></svg>
<svg class="abs" style="left:0;top:726px" width="10" height="10" viewBox="0 0 10 10"><path d="M0 2 V10 H8 Q1.5 9 0 2 Z" fill="#fff"/></svg>
<!--/WM-->
</body></html>
